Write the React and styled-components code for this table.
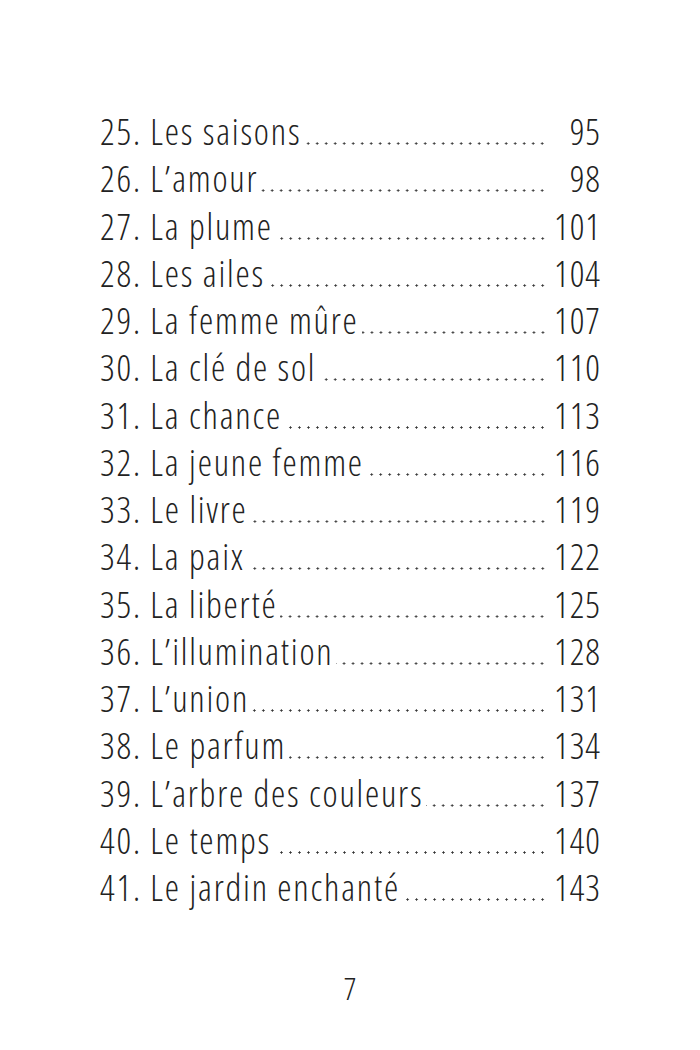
import styled, { createGlobalStyle } from "styled-components";

//
//  Table of contents page: one row per chapter with dotted leaders.
//

const chapters = [
  ["25. Les saisons", "95"],
  ["26. L’amour", "98"],
  ["27. La plume", "101"],
  ["28. Les ailes", "104"],
  ["29. La femme mûre", "107"],
  ["30. La clé de sol", "110"],
  ["31. La chance", "113"],
  ["32. La jeune femme", "116"],
  ["33. Le livre", "119"],
  ["34. La paix", "122"],
  ["35. La liberté", "125"],
  ["36. L’illumination", "128"],
  ["37. L’union", "131"],
  ["38. Le parfum", "134"],
  ["39. L’arbre des couleurs", "137"],
  ["40. Le temps", "140"],
  ["41. Le jardin enchanté", "143"],
];

const App = () => {
  return (
    <>
      <GlobalStyle />
      <Page>
        <List>
          {chapters.map(([title, num]) => (
            <Row key={num}>
              <Title>{title}</Title>
              <Leader />
              <Num>{num}</Num>
            </Row>
          ))}
        </List>
        <Folio>7</Folio>
      </Page>
    </>
  );
};

const GlobalStyle = createGlobalStyle`
body {
    margin: 0;
    background: #fff;
}
`;

const Page = styled.div`
  width: 700px;
  height: 1050px;
  display: flex;
  flex-direction: column;
  align-items: center;
  padding-top: 107px;
  box-sizing: border-box;
  color: #222;
  font-family: "Open Sans", Roboto, sans-serif;
`;

const List = styled.div`
  width: 500px;
  display: flex;
  flex-direction: column;
`;

const Row = styled.div`
  display: flex;
  align-items: baseline;
  height: 47.25px;
  font-size: 36px;
  font-weight: 300;
  font-stretch: 75%;
  letter-spacing: 1.8px;
  white-space: nowrap;
`;

const Title = styled.span`
  white-space: pre;
`;

// empty box: its bottom edge sits on the text baseline
const Leader = styled.span`
  flex: 1;
  height: 3px;
  margin: 0 4px 0 3px;
  background-image: radial-gradient(circle, #333 0.9px, transparent 1.3px);
  background-size: 9px 3px;
  background-repeat: repeat-x;
  background-position: right bottom;
`;

const Num = styled.span`
  width: 50px;
  text-align: right;
  letter-spacing: 1px;
  margin-right: -1px;
`;

const Folio = styled.div`
  margin-top: 56px;
  font-size: 32px;
  font-weight: 350;
  font-stretch: 75%;
`;

export default App;
